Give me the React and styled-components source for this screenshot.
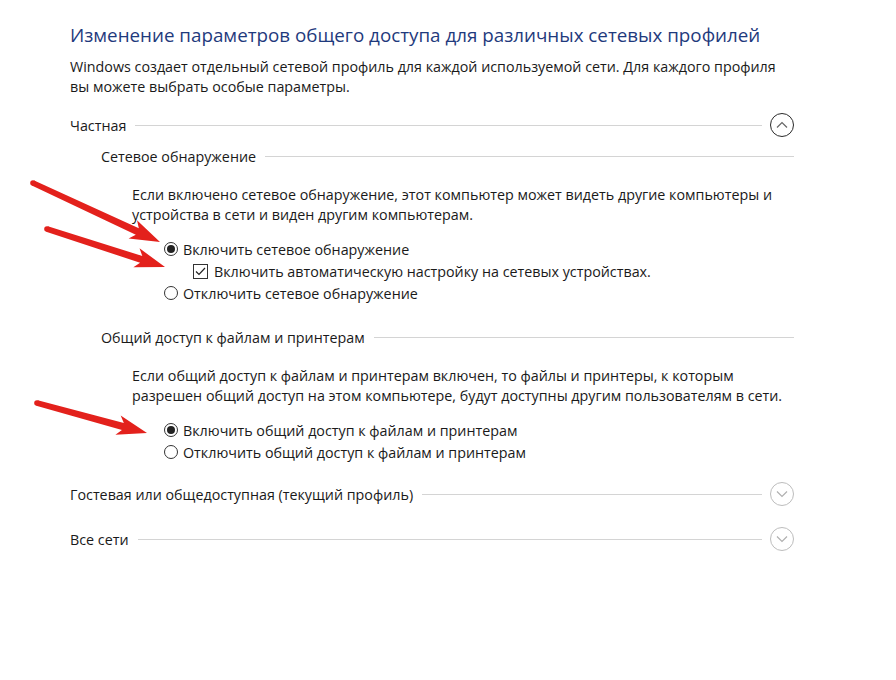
import React from "react";
import styled, { createGlobalStyle } from "styled-components";

const GlobalStyle = createGlobalStyle`
  html, body {
    margin: 0;
    padding: 0;
    background: #ffffff;
  }
  body {
    font-family: "Open Sans", "Noto Sans", "Liberation Sans", sans-serif;
    color: #1a1a1a;
  }
`;

const Page = styled.div`
  position: relative;
  width: 896px;
  height: 680px;
  box-sizing: border-box;
  padding: 21px 0 0 70px;
  overflow: hidden;
`;

const Title = styled.h1`
  margin: 0;
  font-size: 18.8px;
  line-height: 28px;
  font-weight: 400;
  color: #1f3a7d;
`;

const Text = styled.p`
  margin: ${p => p.$top || 0}px 0 0 ${p => p.$indent || 0}px;
  font-size: 14.3px;
  line-height: 20px;
`;

const Header = styled.div`
  display: flex;
  align-items: center;
  height: ${p => (p.$sub ? 20 : 30)}px;
  margin: ${p => p.$top}px 0 0 ${p => (p.$sub ? 31 : 0)}px;
  width: ${p => (p.$sub ? 693 : 724)}px;
  font-size: 14.3px;
`;

const Rule = styled.div`
  flex: 1;
  height: 1px;
  background: #d4d4d4;
  margin: 0 ${p => (p.$gap ? 8 : 0)}px 0 9px;
`;

const Toggle = styled.div`
  width: 22px;
  height: 22px;
  border-radius: 50%;
  border: 1px solid ${p => (p.$open ? "#2b2b2b" : "#bdbdbd")};
  display: flex;
  align-items: center;
  justify-content: center;
`;

const Options = styled.div`
  display: flex;
  flex-direction: column;
  margin: ${p => p.$top}px 0 0 94px;
`;

const Option = styled.label`
  display: flex;
  align-items: center;
  height: 22px;
  font-size: 14.3px;
  padding-left: ${p => (p.$nested ? 29 : 0)}px;
`;

const Radio = styled.span`
  width: 12px;
  height: 12px;
  border-radius: 50%;
  border: 1px solid #333;
  margin-right: 5px;
  display: flex;
  align-items: center;
  justify-content: center;
  &::after {
    content: "";
    width: 8px;
    height: 8px;
    border-radius: 50%;
    background: ${p => (p.$checked ? "#222" : "transparent")};
  }
`;

const Box = styled.span`
  width: 13px;
  height: 13px;
  border: 1px solid #333;
  margin-right: 6px;
  display: flex;
  align-items: center;
  justify-content: center;
`;

const Overlay = styled.svg`
  position: absolute;
  left: 0;
  top: 0;
  pointer-events: none;
`;

function Chevron({ up, color }) {
  return (
    <svg width="12" height="8" viewBox="0 0 12 8">
      <polyline
        points={up ? "1,6.5 6,1.5 11,6.5" : "1,1.5 6,6.5 11,1.5"}
        fill="none"
        stroke={color}
        strokeWidth="1.2"
      />
    </svg>
  );
}

function SectionHeader({ label, top, open }) {
  return (
    <Header $top={top}>
      {label}
      <Rule $gap />
      <Toggle $open={open}>
        <Chevron up={open} color={open ? "#666" : "#b0b0b0"} />
      </Toggle>
    </Header>
  );
}

function SubHeader({ label, top }) {
  return (
    <Header $sub $top={top}>
      {label}
      <Rule />
    </Header>
  );
}

function Arrow({ x1, y1, x2, y2 }) {
  const dx = x2 - x1;
  const dy = y2 - y1;
  const len = Math.hypot(dx, dy);
  const ux = dx / len;
  const uy = dy / len;
  const nx = -uy;
  const ny = ux;
  const head = 30;
  const bx = x2 - ux * head;
  const by = y2 - uy * head;
  const pt = (x, y, w) => `${x + nx * w},${y + ny * w}`;
  const ptn = (x, y, w) => `${x - nx * w},${y - ny * w}`;
  const points = [
    pt(x1, y1, 2.8),
    pt(bx + ux * 5, by + uy * 5, 3.6),
    pt(bx, by, 10),
    `${x2},${y2}`,
    ptn(bx, by, 10),
    ptn(bx + ux * 5, by + uy * 5, 3.6),
    ptn(x1, y1, 2.8),
  ].join(" ");
  return (
    <g fill="#e3211c">
      <polygon points={points} />
      <circle cx={x1} cy={y1} r="2.8" />
    </g>
  );
}

export default function App() {
  return (
    <>
      <GlobalStyle />
      <Page>
        <Title>Изменение параметров общего доступа для различных сетевых профилей</Title>
        <Text $top={8}>
          Windows создает отдельный сетевой профиль для каждой используемой сети. Для каждого профиля
          <br />
          вы можете выбрать особые параметры.
        </Text>

        <SectionHeader label="Частная" top={13} open />
        <SubHeader label="Сетевое обнаружение" top={6} />
        <Text $top={19} $indent={62}>
          Если включено сетевое обнаружение, этот компьютер может видеть другие компьютеры и
          <br />
          устройства в сети и виден другим компьютерам.
        </Text>
        <Options $top={13}>
          <Option>
            <Radio $checked />
            Включить сетевое обнаружение
          </Option>
          <Option $nested>
            <Box>
              <svg width="11" height="9" viewBox="0 0 11 9">
                <polyline points="1,4.5 4,7.5 10,1" fill="none" stroke="#222" strokeWidth="1.2" />
              </svg>
            </Box>
            Включить автоматическую настройку на сетевых устройствах.
          </Option>
          <Option>
            <Radio />
            Отключить сетевое обнаружение
          </Option>
        </Options>

        <SubHeader label="Общий доступ к файлам и принтерам" top={23} />
        <Text $top={19} $indent={62}>
          Если общий доступ к файлам и принтерам включен, то файлы и принтеры, к которым
          <br />
          разрешен общий доступ на этом компьютере, будут доступны другим пользователям в сети.
        </Text>
        <Options $top={13}>
          <Option>
            <Radio $checked />
            Включить общий доступ к файлам и принтерам
          </Option>
          <Option>
            <Radio />
            Отключить общий доступ к файлам и принтерам
          </Option>
        </Options>

        <SectionHeader label="Гостевая или общедоступная (текущий профиль)" top={16} />
        <SectionHeader label="Все сети" top={15} />

        <Overlay width="896" height="680">
          <Arrow x1={33} y1={183} x2={160} y2={242} />
          <Arrow x1={47} y1={229} x2={165} y2={267} />
          <Arrow x1={37} y1={403} x2={147} y2={433} />
        </Overlay>
      </Page>
    </>
  );
}
